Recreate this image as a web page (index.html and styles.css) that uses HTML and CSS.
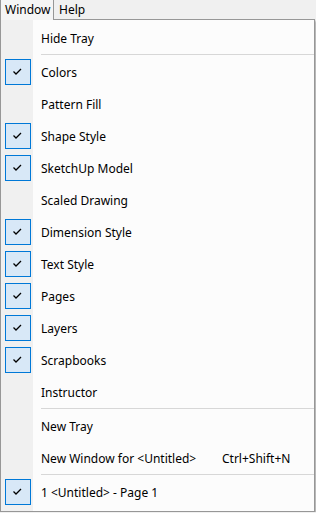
FILE: index.html
```html
<!DOCTYPE html>
<html>
<head>
  <title>Window menu</title>
  <link rel="stylesheet" href="styles.css">
</head>
<body>
  <div class="menubar">
    <div class="menubar-item open">Window</div>
    <div class="menubar-item">Help</div>
  </div>

  <div class="menu">
    <div class="item"><span class="gutter"></span><span class="label">Hide Tray</span></div>
    <div class="sep"></div>
    <div class="item checked"><span class="gutter"><span class="check"><svg width="26" height="26" viewBox="0 0 26 26"><path d="M8.5 12.5 L11 15 L16 10" fill="none" stroke="#000" stroke-width="1.3"/></svg></span></span><span class="label">Colors</span></div>
    <div class="item"><span class="gutter"></span><span class="label">Pattern Fill</span></div>
    <div class="item checked"><span class="gutter"><span class="check"><svg width="26" height="26" viewBox="0 0 26 26"><path d="M8.5 12.5 L11 15 L16 10" fill="none" stroke="#000" stroke-width="1.3"/></svg></span></span><span class="label">Shape Style</span></div>
    <div class="item checked"><span class="gutter"><span class="check"><svg width="26" height="26" viewBox="0 0 26 26"><path d="M8.5 12.5 L11 15 L16 10" fill="none" stroke="#000" stroke-width="1.3"/></svg></span></span><span class="label">SketchUp Model</span></div>
    <div class="item"><span class="gutter"></span><span class="label">Scaled Drawing</span></div>
    <div class="item checked"><span class="gutter"><span class="check"><svg width="26" height="26" viewBox="0 0 26 26"><path d="M8.5 12.5 L11 15 L16 10" fill="none" stroke="#000" stroke-width="1.3"/></svg></span></span><span class="label">Dimension Style</span></div>
    <div class="item checked"><span class="gutter"><span class="check"><svg width="26" height="26" viewBox="0 0 26 26"><path d="M8.5 12.5 L11 15 L16 10" fill="none" stroke="#000" stroke-width="1.3"/></svg></span></span><span class="label">Text Style</span></div>
    <div class="item checked"><span class="gutter"><span class="check"><svg width="26" height="26" viewBox="0 0 26 26"><path d="M8.5 12.5 L11 15 L16 10" fill="none" stroke="#000" stroke-width="1.3"/></svg></span></span><span class="label">Pages</span></div>
    <div class="item checked"><span class="gutter"><span class="check"><svg width="26" height="26" viewBox="0 0 26 26"><path d="M8.5 12.5 L11 15 L16 10" fill="none" stroke="#000" stroke-width="1.3"/></svg></span></span><span class="label">Layers</span></div>
    <div class="item checked"><span class="gutter"><span class="check"><svg width="26" height="26" viewBox="0 0 26 26"><path d="M8.5 12.5 L11 15 L16 10" fill="none" stroke="#000" stroke-width="1.3"/></svg></span></span><span class="label">Scrapbooks</span></div>
    <div class="item"><span class="gutter"></span><span class="label">Instructor</span></div>
    <div class="sep"></div>
    <div class="item"><span class="gutter"></span><span class="label">New Tray</span></div>
    <div class="item"><span class="gutter"></span><span class="label">New Window for &lt;Untitled&gt;</span><span class="shortcut">Ctrl+Shift+N</span></div>
    <div class="sep"></div>
    <div class="item checked"><span class="gutter"><span class="check"><svg width="26" height="26" viewBox="0 0 26 26"><path d="M8.5 12.5 L11 15 L16 10" fill="none" stroke="#000" stroke-width="1.3"/></svg></span></span><span class="label">1 &lt;Untitled&gt; - Page 1</span></div>
  </div>
</body>
</html>
```

FILE: styles.css
```css
body {
  margin: 0;
  background-color: #f0f0f0;
  font-family: "Noto Sans", "Open Sans", Arial, sans-serif;
  font-size: 12px;
  color: #000000;
}

.menubar {
  display: flex;
  height: 20px;
  background-color: #f0f0f0;
}

.menubar-item {
  padding: 0 6px 0 5px;
  line-height: 19px;
  box-sizing: border-box;
  height: 20px;
}

.menubar-item.open {
  position: relative;
  z-index: 1;
  width: 54px;
  padding-left: 4px;
  background-color: #f5f5f5;
  border-left: 1px solid #979797;
  border-right: 1px solid #979797;
}

.menu {
  width: 315px;
  margin-top: -1px;
  padding: 2px 0 3px 0;
  box-sizing: border-box;
  background-color: #fcfcfc;
  border: 1px solid #979797;
  box-shadow: 2px 2px 2px rgba(0, 0, 0, 0.25);
  background-image: linear-gradient(to right, #f0f0f0 32px, transparent 32px);
}

.item {
  display: flex;
  align-items: center;
  height: 32px;
}

.gutter {
  display: flex;
  align-items: center;
  width: 40px;
  height: 32px;
  flex-shrink: 0;
}

.check {
  display: block;
  width: 24px;
  height: 24px;
  margin-left: 4px;
  background-color: #d8e8f7;
  border: 1px solid #0078d7;
}

.check svg {
  display: block;
  margin: -1px 0 0 -1px;
}

.label {
  flex: 1;
  white-space: nowrap;
}

.shortcut {
  width: 92px;
  white-space: nowrap;
}

.sep {
  height: 1px;
  margin: 0 0 1px 40px;
  background-color: #d7d7d7;
}
```
